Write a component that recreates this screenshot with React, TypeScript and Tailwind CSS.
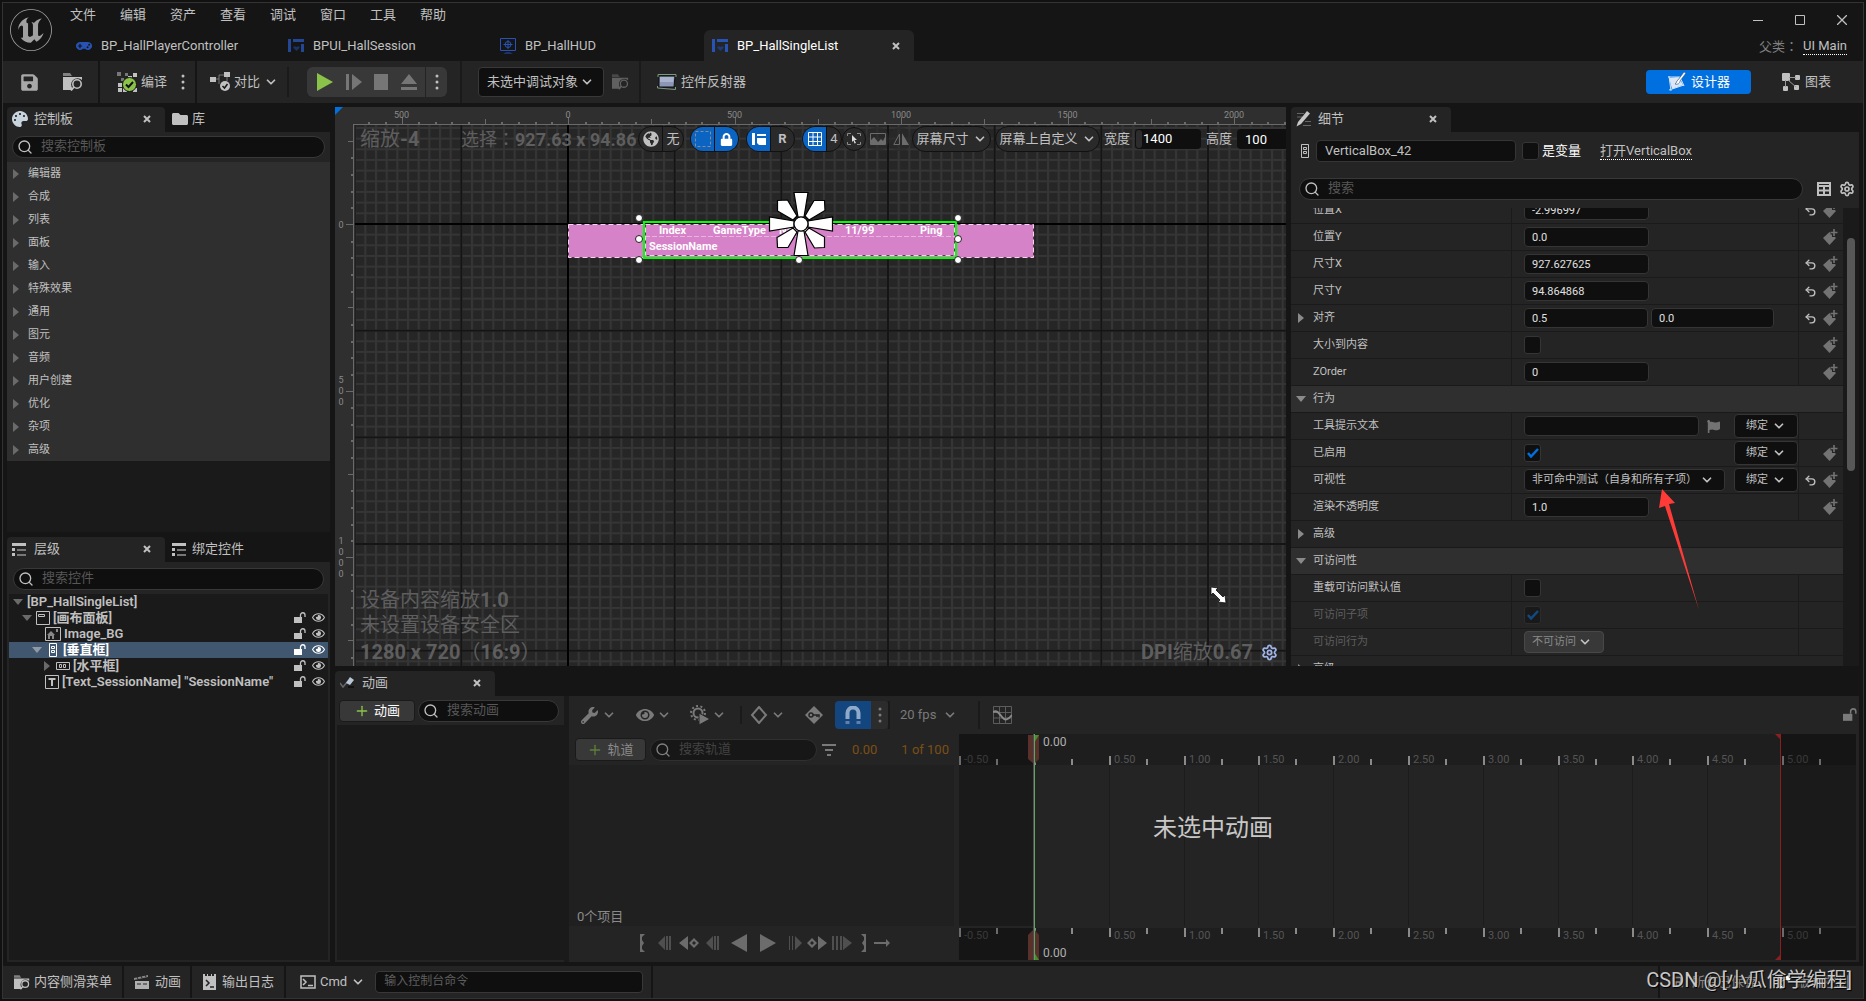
import { useId, type ReactNode } from 'react';
import { ChevronDown, Plus, Search, Settings, Undo2 } from 'lucide-react';
import { FaEye, FaFlag, FaFolder, FaGamepad, FaGlobeAmericas, FaLock, FaPalette, FaRegEye, FaSave, FaWrench } from 'react-icons/fa';
import { SiUnrealengine } from 'react-icons/si';

const MENUS = ['文件', '编辑', '资产', '查看', '调试', '窗口', '工具', '帮助'];

const PALETTE = ['编辑器', '合成', '列表', '面板', '输入', '特殊效果', '通用', '图元', '音频', '用户创建', '优化', '杂项', '高级'];

type IconProps = { className?: string };

/* ---------- icons ---------- */

function WidgetIcon({ className = '' }: IconProps) {
  return (
    <svg viewBox="0 0 16 14" className={`h-[14px] w-4 shrink-0 ${className}`} fill="#2753b5">
      <path d="M0 0h3v13H0zM5 0h11v3H5zM13 5h3v8h-3z" />
      <path d="M8.5 12 5.5 9c-.8-1.6 1.700-2.600 3-.9 1.300-1.700 3.800-.7 3 .9z" fill="#1e3a78" />
    </svg>
  );
}

function HudIcon() {
  return (
    <svg viewBox="0 0 16 16" className="size-4 shrink-0" fill="none" stroke="#2753b5">
      <path d="M.5.5h15v12H.5z" />
      <circle cx="8" cy="6.500" r="3" />
      <path d="M8 2v9M3.500 6.500h9" />
      <path d="M3 15.500c2-1.500 8-1.500 10 0z" fill="#2753b5" stroke="none" />
    </svg>
  );
}

function FolderSearchIcon({ className = '' }: IconProps) {
  return (
    <svg viewBox="0 0 20 18" className={`shrink-0 ${className}`}>
      <path d="M0 0h7l2 3H0z" fill="currentColor" opacity=".6" />
      <path d="M0 4h19v3a6 6 0 0 0-9 9l-1 1H0z" fill="currentColor" />
      <circle cx="14" cy="11" r="4.200" fill="#242424" stroke="currentColor" strokeWidth="1.600" />
      <path d="m11 14-3 3.500" stroke="currentColor" strokeWidth="1.800" />
    </svg>
  );
}

function CompileIcon() {
  return (
    <svg viewBox="0 0 20 20" className="size-5 shrink-0" fill="#c0c0c0">
      <path d="M0 0h4v4H0zM8 1h3v3H8zM4 6h3v3H4z" fill="#777" />
      <path d="M16 1h4v4h-4zM11 4h4v4h-4zM1 11h4v4H1zM1 16h4v4H1zM6 16h4v4H6zM16 16h4v4h-4z" />
      <circle cx="12.500" cy="12.500" r="7" fill="#8bc34a" stroke="#151515" />
      <path d="m9 12.500 2.500 2.500 4.500-5" fill="none" stroke="#111" strokeWidth="2" />
    </svg>
  );
}

function DiffIcon() {
  return (
    <svg viewBox="0 0 20 20" className="size-5 shrink-0" fill="#c0c0c0">
      <path d="M0 5h6v5H0zM14 0h6v5h-6z" />
      <path d="M6 7h3M9 12V3h5M17 5v4" fill="none" stroke="#777" />
      <circle cx="15" cy="14" r="5" />
      <path d="m12.500 14 2 2 3-4" fill="none" stroke="#151515" strokeWidth="1.500" />
    </svg>
  );
}

function ReflectorIcon() {
  return (
    <svg viewBox="0 0 20 16" className="h-4 w-5 shrink-0">
      <path d="M2 2h16l-1 11H2z" fill="#8c97b8" stroke="#111" />
      <path d="M3 3h14l-1 5H3z" fill="#aab3cc" />
      <path d="M1 3V.5h18V3M.5 12v2l18 1.500V13" fill="none" stroke="#7a9a80" />
    </svg>
  );
}

function DesignerIcon() {
  return (
    <svg viewBox="0 0 20 20" className="size-5 shrink-0">
      <path d="m2 6 10-1 4 8-11 4z" fill="#dbe7f5" />
      <path d="M1 5h12M2 4l2 15M2 18l15-5M13 5l4 9" fill="none" stroke="#cfe3fa" />
      <path d="M8 12c2-1 1-3 3-4l6-8 2 1-6 8c0 2-2 4-5 3z" fill="#fff" stroke="#1e4c86" strokeWidth=".6" />
    </svg>
  );
}

function GraphIcon() {
  return (
    <svg viewBox="0 0 18 18" className="size-[18px] shrink-0" fill="#c0c0c0">
      <rect width="8" height="8" rx="1" />
      <rect x="13" y="2" width="5" height="5" rx="1" />
      <rect x="1" y="13" width="5" height="5" rx="1" />
      <rect x="12" y="12" width="5" height="5" rx="1" />
      <path d="M7 4.500h7M3.500 7v7M6 7l8 7" stroke="#999" />
    </svg>
  );
}

function ListIcon() {
  return (
    <svg viewBox="0 0 14 13" className="h-[13px] w-[14px] shrink-0" fill="#c0c0c0">
      <path d="M0 0h14v3H0zM0 5h3v3H0zM0 10h3v3H0z" />
      <path d="M5 6h9v2H5zM5 11h9v2H5z" fill="#777" />
    </svg>
  );
}

function PencilIcon() {
  return (
    <svg viewBox="0 0 16 16" className="size-4 shrink-0">
      <path d="M1 2.500h7M1 6h5M9 10.500h6M7 14.500h8" stroke="#666" />
      <path d="m11 0 3 2.500-9 10.500-4.500 2.500L2 11z" fill="#c8c8c8" />
    </svg>
  );
}

function AnimIcon() {
  return (
    <svg viewBox="0 0 15 12" className="h-3 w-[15px] shrink-0">
      <path d="m0 6 3 4 5-6" fill="none" stroke="#666" strokeWidth="1.500" />
      <path d="m10 0 4 3-4 5-4-2z" fill="#b9c6d6" />
      <path d="M8 10h6" stroke="#111" strokeWidth="2" />
    </svg>
  );
}

function VBoxIcon() {
  return (
    <svg viewBox="0 0 8 14" className="h-[14px] w-2 shrink-0" fill="none" stroke="currentColor">
      <path d="M.5.5h7v13h-7zM2.500 3.500h3v2h-3zM2.500 7.500h3v2h-3z" />
    </svg>
  );
}

function HBoxIcon() {
  return (
    <svg viewBox="0 0 14 8" className="h-2 w-[14px] shrink-0" fill="none" stroke="currentColor">
      <path d="M.5.5h13v7H.5zM3.500 2.500h2v3h-2zM7.500 2.500h2v3h-2z" />
    </svg>
  );
}

function CanvasIcon() {
  return (
    <svg viewBox="0 0 14 14" className="size-[14px] shrink-0" fill="none" stroke="currentColor">
      <path d="M.5.5h13v13H.5zM2.500 3.500h6v2h-6z" />
    </svg>
  );
}

function ImageIcon() {
  return (
    <svg viewBox="0 0 16 14" className="h-[14px] w-4 shrink-0" fill="none" stroke="currentColor">
      <path d="M.5.500h15v13H.5z" />
      <path d="m2 8 4-4 4 4H9v4H7V9H5v3H3V8zM11 2h2v3h-2z" fill="#888" stroke="none" />
    </svg>
  );
}

function TextIcon() {
  return (
    <svg viewBox="0 0 14 14" className="size-[14px] shrink-0" fill="none" stroke="currentColor">
      <path d="M.5.5h13v13H.5z" />
      <path d="M3.500 4h7M7 4v7" strokeWidth="2" />
    </svg>
  );
}

function UnlockIcon({ className = '' }: IconProps) {
  return (
    <svg viewBox="0 0 12 12" className={`size-3 shrink-0 ${className}`}>
      <path d="M0 5h8v6H0z" fill="currentColor" />
      <path d="M6.500 5V3a2.200 2.200 0 0 1 4.500 0v2" fill="none" stroke="currentColor" strokeWidth="1.300" />
    </svg>
  );
}

function KeyframeIcon() {
  return (
    <svg viewBox="0 0 15 16" className="h-4 w-[15px] shrink-0" fill="#737373">
      <path d="m6.500 3 6.500 6-6.500 7L0 9z" />
      <path d="M11 0v8M7.500 3.500H15" stroke="#242424" strokeWidth="4" />
      <path d="M11 0v7M7.500 3.500h7" stroke="#737373" strokeWidth="1.600" />
    </svg>
  );
}

function Dots({ className = '' }: IconProps) {
  return (
    <svg viewBox="0 0 4 16" className={`h-4 w-1 shrink-0 ${className}`} fill="currentColor">
      <circle cx="2" cy="2" r="1.500" />
      <circle cx="2" cy="8" r="1.500" />
      <circle cx="2" cy="14" r="1.500" />
    </svg>
  );
}

function Caret({ open, className = '' }: { open?: boolean; className?: string }) {
  return (
    <svg viewBox="0 0 10 10" className={`size-[10px] shrink-0 ${className}`} fill="currentColor">
      <path d={open ? 'M0 2h10L5 8z' : 'M2 0v10l6-5z'} />
    </svg>
  );
}

function Chevron({ className = '' }: IconProps) {
  return <ChevronDown className={`size-[14px] shrink-0 ${className}`} strokeWidth={3} />;
}

// the TC face centres full-width punctuation in its cell
function Punct({ children }: { children: string }) {
  return <span className="font-['Noto_Sans_CJK_TC',sans-serif] font-normal">{children}</span>;
}

/* ---------- shared controls ---------- */

function SearchBox({ placeholder, className = '' }: { placeholder: string; className?: string }) {
  return (
    <label className={`flex h-[22px] min-w-0 items-center gap-2 rounded-full border border-[#383838] bg-[#0f0f0f] pl-1 ${className}`}>
      <Search className="size-4 shrink-0 text-[#c0c0c0]" strokeWidth={2} />
      <input
        type="search"
        aria-label={placeholder}
        placeholder={placeholder}
        className="w-full min-w-0 bg-transparent pb-[2px] text-[13px] leading-4 outline-none placeholder:text-[#575757]"
      />
    </label>
  );
}

function DockTab({ icon, label, active, wide }: { icon: ReactNode; label: string; active?: boolean; wide?: boolean }) {
  return (
    <div className={`flex h-[25px] shrink-0 items-center pb-px pl-[5px] ${active ? 'rounded-t bg-[#242424]' : ''} ${wide ? 'w-40' : 'w-[158px]'}`}>
      <span className="flex w-[22px] items-center">{icon}</span>
      <span className="grow text-[13px] leading-4">{label}</span>
      {active && (
        <button aria-label={`关闭${label}`} className="mr-3 flex size-3 items-center justify-center">
          <CloseMark />
        </button>
      )}
    </div>
  );
}

function CloseMark() {
  return (
    <svg viewBox="0 0 8 8" className="size-2" stroke="currentColor" strokeWidth="2">
      <path d="m1 1 6 6M7 1 1 7" />
    </svg>
  );
}

function Check({ id, label, checked, disabled }: { id?: string; label?: string; checked?: boolean; disabled?: boolean }) {
  return (
    <span className={`relative flex h-[18px] w-[17px] shrink-0 ${disabled ? 'opacity-50' : ''}`}>
      <input
        id={id}
        type="checkbox"
        aria-label={label}
        defaultChecked={checked}
        disabled={disabled}
        className="size-full appearance-none rounded-[3px] border border-[#353535] bg-[#0f0f0f]"
      />
      {checked && (
        <svg viewBox="0 0 12 10" className="pointer-events-none absolute top-1 left-[3px] h-[10px] w-3" fill="none" stroke="#0070e0" strokeWidth="2.500">
          <path d="m1 5 3 3.500L11 1" />
        </svg>
      )}
    </span>
  );
}

/* ---------- title bar ---------- */

const DOCS = [
  { name: 'BP_HallPlayerController', icon: <FaGamepad className="size-4 text-[#2753b5]" /> },
  { name: 'BPUI_HallSession', icon: <WidgetIcon className="opacity-80" /> },
  { name: 'BP_HallHUD', icon: <HudIcon /> },
  { name: 'BP_HallSingleList', icon: <WidgetIcon />, active: true },
];

function TitleBar() {
  return (
    <header className="flex h-[58px] shrink-0">
      <SiUnrealengine className="mt-[6px] ml-[7px] size-[42px] shrink-0 text-[#a0a0a0]" />
      <div className="ml-4 flex grow flex-col justify-between">
        <nav className="flex pt-1 pl-[2px]">
          {MENUS.map((m) => (
            <button key={m} className="w-[50px] text-left text-[13px] leading-4">
              {m}
            </button>
          ))}
        </nav>
        <div className="flex gap-[2px]">
          {DOCS.map((d) => (
            <div
              key={d.name}
              className={`flex h-[31px] w-[210px] items-center gap-[9px] rounded-t-md pl-2 text-[13px] ${d.active ? 'bg-[#242424] text-white' : ''}`}
            >
              {d.icon}
              <span className="grow">{d.name}</span>
              {d.active && (
                <button aria-label="关闭标签" className="mr-3 flex size-3 items-center justify-center text-[#c0c0c0]">
                  <CloseMark />
                </button>
              )}
            </div>
          ))}
        </div>
      </div>
      <div className="flex flex-col items-end justify-between pr-4 pb-[6px]">
        <div className="flex gap-8 pt-3">
          <button aria-label="最小化">
            <svg viewBox="0 0 10 10" className="size-[10px]" stroke="currentColor"><path d="M0 5.500h10" /></svg>
          </button>
          <button aria-label="最大化">
            <svg viewBox="0 0 10 10" className="size-[10px]" fill="none" stroke="currentColor"><path d="M.5.5h9v9h-9z" /></svg>
          </button>
          <button aria-label="关闭">
            <svg viewBox="0 0 10 10" className="size-[10px]" stroke="currentColor" strokeWidth="1.300"><path d="m0 0 10 10M10 0 0 10" /></svg>
          </button>
        </div>
        <p className="flex gap-[5px] text-[13px] leading-4">
          <span className="text-[#808080]">父类<Punct>：</Punct></span>
          <a href="#parent" className="border-b border-dotted border-white">UI Main</a>
        </p>
      </div>
    </header>
  );
}

/* ---------- toolbar ---------- */

function Toolbar() {
  return (
    <div className="flex h-[42px] shrink-0 items-center bg-[#242424] text-[13px]">
      <div className="flex h-full w-[97px] items-center gap-6 border-r-2 border-[#151515] pl-[17px]">
        <button aria-label="保存"><FaSave className="size-[19px] text-[#a8a8a8]" /></button>
        <button aria-label="浏览"><FolderSearchIcon className="h-[18px] w-5" /></button>
      </div>
      <div className="flex h-full w-[97px] items-center border-r-2 border-[#151515] pl-[17px]">
        <button className="flex items-center gap-1"><CompileIcon />编译</button>
        <button aria-label="编译选项" className="ml-[14px]"><Dots /></button>
      </div>
      <button className="flex h-[30px] w-[92px] items-center gap-1 border-r-2 border-[#1a1a1a] pl-[13px]">
        <DiffIcon />对比<Chevron />
      </button>
      <div className="ml-[18px] flex h-[30px] w-[140px] items-center rounded-md bg-[#383838] text-[#767676]">
        <button aria-label="播放" className="ml-[10px]"><svg viewBox="0 0 16 18" className="h-[18px] w-4" fill="#8bc34a"><path d="M0 0v18l16-9z" /></svg></button>
        <button aria-label="步进" className="ml-[13px]"><svg viewBox="0 0 16 16" className="size-4" fill="currentColor"><path d="M0 0h3v16H0zM6 0v16l10-8z" /></svg></button>
        <button aria-label="停止" className="ml-3"><svg viewBox="0 0 14 16" className="h-4 w-[14px]" fill="currentColor"><path d="M0 0h14v16H0z" /></svg></button>
        <button aria-label="弹出" className="ml-[13px]"><svg viewBox="0 0 16 16" className="size-4" fill="currentColor"><path d="m8 0 8 10H0zM0 13h16v3H0z" /></svg></button>
        <button aria-label="播放选项" className="ml-2 flex h-full w-[22px] items-center justify-center border-l border-[#242424] text-[#c0c0c0]"><Dots /></button>
      </div>
      <div className="ml-[13px] h-full w-[2px] bg-[#1a1a1a]" />
      <label className="relative ml-4 flex items-center">
        <select aria-label="调试对象" className="h-[30px] w-[126px] appearance-none rounded border border-[#383838] bg-[#0f0f0f] pl-2 text-[13px] text-[#c0c0c0]">
          <option>未选中调试对象</option>
        </select>
        <Chevron className="pointer-events-none absolute right-[10px]" />
      </label>
      <button aria-label="浏览调试对象" className="ml-2 text-[#606060]"><FolderSearchIcon className="h-4 w-[17px]" /></button>
      <div className="ml-[10px] h-full w-[2px] bg-[#1a1a1a]" />
      <button className="ml-4 flex items-center gap-1"><ReflectorIcon />控件反射器</button>
      <div className="ml-auto flex items-center pr-8">
        <button className="flex h-6 w-[105px] items-center justify-center gap-1 rounded bg-[#0070e0] text-white"><DesignerIcon />设计器</button>
        <button className="ml-[31px] flex items-center gap-[5px]"><GraphIcon />图表</button>
      </div>
    </div>
  );
}

/* ---------- left column ---------- */

function PalettePanel() {
  return (
    <section className="flex min-h-0 flex-1 flex-col">
      <div className="flex">
        <DockTab active label="控制板" icon={<FaPalette className="size-4 text-[#c7d3dd]" />} />
        <DockTab label="库" icon={<FaFolder className="ml-[2px] size-4" />} />
      </div>
      <div className="bg-[#242424] px-[5px] py-1"><SearchBox placeholder="搜索控制板" /></div>
      <ul className="bg-[#2f2f2f] text-[11px]">
        {PALETTE.map((p) => (
          <li key={p} className="flex h-[23px] items-center gap-[7px] pt-px pl-1">
            <Caret className="text-[#6a6a6a]" />
            {p}
          </li>
        ))}
      </ul>
      <div className="grow bg-[#1a1a1a]" />
    </section>
  );
}

const TREE = [
  { name: '[BP_HallSingleList]', pad: 'pl-1', open: true, icon: null },
  { name: '[画布面板]', pad: 'pl-[13px]', open: true, icon: <CanvasIcon />, toggles: true },
  { name: 'Image_BG', pad: 'pl-9', icon: <ImageIcon />, toggles: true },
  { name: '[垂直框]', pad: 'pl-[23px]', open: true, icon: <VBoxIcon />, toggles: true, selected: true },
  { name: '[水平框]', pad: 'pl-[33px]', open: false, icon: <HBoxIcon />, toggles: true },
  { name: '[Text_SessionName] "SessionName"', pad: 'pl-9', icon: <TextIcon />, toggles: true },
];

function HierarchyPanel() {
  return (
    <section className="flex min-h-0 flex-1 flex-col">
      <div className="flex">
        <DockTab active label="层级" icon={<ListIcon />} />
        <DockTab label="绑定控件" icon={<span className="ml-[2px]"><ListIcon /></span>} />
      </div>
      <div className="flex grow flex-col bg-[#242424] px-[2px] pt-[6px] pb-[2px]">
        <SearchBox placeholder="搜索控件" className="mx-1 mb-1" />
        <ul className="grow bg-[#1a1a1a] text-[13px] leading-4 font-semibold">
          {TREE.map((n) => (
            <li key={n.name} className={`flex h-4 items-center ${n.pad} ${n.selected ? 'bg-[#40576f] text-white' : ''}`}>
              {n.open !== undefined && <Caret open={n.open} className={`mr-1 ${n.selected ? 'text-[#8f9aa5]' : 'text-[#6a6a6a]'}`} />}
              {n.selected && <span className="w-[3px]" />}
              {n.icon}
              <span className={`grow whitespace-nowrap ${n.selected ? 'pl-[6px]' : n.icon ? 'pl-[3px]' : ''}`}>{n.name}</span>
              {n.toggles && (
                <span className="flex items-center gap-[6px] pr-[3px] pb-px">
                  <button aria-label="锁定"><UnlockIcon /></button>
                  <button aria-label="可见"><FaRegEye className="size-[13px]" /></button>
                </span>
              )}
            </li>
          ))}
        </ul>
      </div>
    </section>
  );
}

/* ---------- designer viewport ---------- */

const ORIGIN_X = 233;
const ORIGIN_Y = 117;
const STEP = 16.65;

function tickLength(i: number) {
  if (i % 10 === 0) return 7;
  return i % 5 === 0 ? 5 : 2;
}

function DesignSurface() {
  const hTicks = Array.from({ length: 60 }, (_, i) => i - 12);
  const vTicks = Array.from({ length: 60 }, (_, i) => i - 5);
  return (
    <svg className="absolute inset-0 size-full" fontFamily="Roboto, sans-serif">
      <defs>
        <pattern id="minor" x={ORIGIN_X - 1} y={ORIGIN_Y - 1} width="10.667" height="10.667" patternUnits="userSpaceOnUse">
          <path d="M1 0v10.667M0 1h10.667" stroke="#353535" strokeWidth="2" />
        </pattern>
        <pattern id="major" x={ORIGIN_X - 1} y={ORIGIN_Y - 1} width="106.670" height="106.670" patternUnits="userSpaceOnUse">
          <path d="M1 0v106.670M0 1h106.670" stroke="#151515" strokeWidth="2" />
        </pattern>
      </defs>
      <rect width="100%" height="100%" fill="#262626" />
      <rect width="100%" height="100%" fill="url(#minor)" />
      <rect width="100%" height="100%" fill="url(#major)" />
      <rect x={ORIGIN_X - 1} width="2" height="100%" />
      <rect y={ORIGIN_Y - 1} width="100%" height="2" />

      {/* rulers */}
      <rect width="100%" height="18" fill="#2f2f2f" />
      <rect width="20" height="100%" fill="#2f2f2f" />
      <path d="M18 17.500h2000M18.500 17v2000" stroke="#6a6a6a" />
      <g fill="#6a6a6a">
        {hTicks.map((i) => (
          <rect key={i} x={Math.round(ORIGIN_X + i * STEP)} y={17 - tickLength(i)} width={i % 5 ? 2 : 1} height={tickLength(i)} />
        ))}
        {vTicks.map((i) => (
          <rect key={i} x={18 - tickLength(i)} y={Math.round(ORIGIN_Y + i * STEP)} width={tickLength(i)} height={i % 5 ? 2 : 1} />
        ))}
      </g>
      <rect width="18" height="17" fill="#2f2f2f" />
      <g fill="#8a8a8a" fontSize="9" textAnchor="middle">
        {[-500, 0, 500, 1000, 1500, 2000].map((v) => (
          <text key={v} x={ORIGIN_X + v * 0.333} y="11">{Math.abs(v)}</text>
        ))}
        <text x="6" y="121">0</text>
        {[...'500'].map((c, i) => <text key={i} x="6" y={276 + i * 11}>{c}</text>)}
        {[...'1000'].map((c, i) => <text key={i} x="6" y={437 + i * 11}>{c}</text>)}
      </g>
      <path d="M0 0h8L0 8z" fill="#0070e0" />

      {/* edited widget */}
      <rect x="233" y="117" width="466" height="34" fill="#d682c9" />
      <rect x="233.500" y="117.500" width="465" height="33" fill="none" stroke="#5c3556" />
      <rect x="233.500" y="117.500" width="465" height="33" fill="none" stroke="#f3d3ee" strokeDasharray="5 3" />
      <path d="M310 129.500h309" stroke="#f0c8ea" strokeDasharray="5 2" opacity=".7" />
      <g fill="none">
        <rect x="310.500" y="117.500" width="309" height="31" stroke="#5c3556" />
        <rect x="310.500" y="117.500" width="309" height="31" stroke="#f3d3ee" strokeDasharray="5 3" />
        <rect x="309" y="115" width="312" height="36" stroke="#00ff00" strokeWidth="2" />
      </g>
      <g fill="#fff" fontSize="11" fontWeight="700">
        <text x="324" y="127">Index</text>
        <text x="378" y="127">GameType</text>
        <text x="444" y="127">Name</text>
        <text x="510" y="127">11/99</text>
        <text x="585" y="127">Ping</text>
        <text x="314" y="143">SessionName</text>
      </g>
      <g fill="#fff" stroke="#222">
        {[[304, 111], [304, 132], [304, 153], [464, 153], [623, 111], [623, 132], [623, 153]].map(([x, y]) => (
          <circle key={`${x},${y}`} cx={x} cy={y} r="3.500" />
        ))}
      </g>
      <g transform="translate(466 117)" fill="#fff" stroke="#000" strokeWidth="1.200">
        {[0, 90, 180, 270].map((a) => (
          <g key={a} transform={`rotate(${a})`}>
            <path d="M-7-31.500H7L3-7h-6z" />
            <path d="m-23.500-23.500 10-.5L-4-8l-4 4-15.500-9z" />
          </g>
        ))}
        <circle r="7" />
      </g>

      {/* resize cursor */}
      <path d="m876 480 7 1-2 2 7 7 2-2 1 8-8-1 2-2-7-7-2 2z" fill="#fff" stroke="#111" strokeWidth=".8" />
    </svg>
  );
}

const PILL = 'flex h-[26px] shrink-0 items-center overflow-hidden rounded-full border border-[#111] bg-[#2a2a2a]';

function ViewportBar() {
  return (
    <div className="relative flex items-center pt-[19px] pl-[25px] text-[13px]">
      <span className="w-[101px] shrink-0 text-[20px] leading-6 font-bold text-[#5e5e5e]"><span className="font-normal">缩放</span>-4</span>
      <span className="w-[177px] shrink-0 text-[18px] leading-6 font-bold whitespace-nowrap text-[#5e5e5e]"><span className="font-normal">选择</span><Punct>：</Punct>927.63 x 94.86</span>
      <div className={`${PILL} w-[46px]`}>
        <button aria-label="本地化" className="flex h-full w-6 items-center justify-center border-r border-[#111]"><FaGlobeAmericas className="size-4" /></button>
        <button className="w-5 text-center">无</button>
      </div>
      <div className={`${PILL} ml-[6px] w-[49px]`}>
        <button aria-label="虚线轮廓" className="flex h-full w-6 items-center justify-center border-r border-[#111] bg-[#0b63c2]">
          <svg viewBox="0 0 16 16" className="size-4" fill="none" stroke="#8b8b8b" strokeDasharray="3 2"><path d="M.5.5h15v15H.5z" /></svg>
        </button>
        <button aria-label="尊重锁定" className="flex h-full grow items-center justify-center bg-[#0b63c2] text-white"><FaLock className="size-[13px]" /></button>
      </div>
      <div className={`${PILL} ml-[7px] w-[49px]`}>
        <button aria-label="布局变换" className="flex h-full w-6 items-center justify-center border-r border-[#111] bg-[#0b63c2]">
          <svg viewBox="0 0 14 12" className="h-3 w-[14px]" fill="#fff"><path d="M0 0h3v12H0zM5 1h9v2H5zM5 5h9v7H7l-2-2z" /></svg>
        </button>
        <button className="grow text-center font-bold">R</button>
      </div>
      <div className={`${PILL} ml-[7px] w-10`}>
        <button aria-label="网格对齐" className="flex h-full w-6 items-center justify-center border-r border-[#111] bg-[#0b63c2]">
          <svg viewBox="0 0 14 14" className="size-[14px]" fill="none" stroke="#fff"><path d="M.5.5h13v13H.5zM5 0v14M9.500 0v14M0 5h14M0 9.500h14" /></svg>
        </button>
        <button className="grow text-center">4</button>
      </div>
      <button aria-label="缩放到适应" className="flex size-6 shrink-0 items-center justify-center rounded-full border border-[#111] bg-[#2a2a2a]">
        <svg viewBox="0 0 14 12" className="h-3 w-[14px]"><path d="M.5 3V.5H4M10 .5h3.500V3M.5 9v2.500H4M10 11.500h3.500V9" fill="none" stroke="#8a8a8a" /><path d="m5 2 5 5H7.500L9 10l-1.500.5-1-3L5 9z" fill="#ddd" /></svg>
      </button>
      <button aria-label="背景图片" className="flex h-6 w-[23px] shrink-0 items-center justify-center rounded-full bg-[#2a2a2a]/60 text-[#6c6c6c]">
        <svg viewBox="0 0 16 12" className="h-3 w-4"><path d="M.5.5h15v11H.5z" fill="none" stroke="currentColor" /><path d="M1 11V7l3-3 4 5 3-3 2 2 2-4v7z" fill="currentColor" /></svg>
      </button>
      <button aria-label="翻转" className="flex h-6 w-[23px] shrink-0 items-center justify-center rounded-full bg-[#2a2a2a]/60 text-[#6c6c6c]">
        <svg viewBox="0 0 16 12" className="h-3 w-4"><path d="M.8 11.500 6.500 1v10.500z" fill="none" stroke="currentColor" /><path d="M9 0v12h7z" fill="currentColor" /></svg>
      </button>
      <button className={`${PILL} w-[79px] justify-center gap-1`}>屏幕尺寸<Chevron className="size-[13px]" /></button>
      <button className={`${PILL} ml-1 w-[105px] justify-center gap-1`}>屏幕上自定义<Chevron className="size-[13px]" /></button>
      <label htmlFor="vp-width" className="ml-1 shrink-0">宽度</label>
      <span className="ml-[5px] flex h-5 w-[66px] shrink-0 items-center rounded bg-[#0f0f0f] pl-px">
        <span className="h-[18px] w-[6px] rounded-full bg-[#2c2c2c]" />
        <input id="vp-width" defaultValue="1400" className="w-14 bg-transparent pl-px text-white" />
      </span>
      <label htmlFor="vp-height" className="ml-[5px] shrink-0">高度</label>
      <input id="vp-height" defaultValue="100" className="ml-[5px] h-5 w-[60px] shrink-0 rounded bg-[#0f0f0f] pl-2 text-white" />
    </div>
  );
}

function Viewport() {
  return (
    <section className="relative flex min-w-0 flex-1 flex-col justify-between overflow-hidden">
      <DesignSurface />
      <ViewportBar />
      <div className="relative flex items-end justify-between pr-2 pb-px pl-[25px] text-[20px] leading-[25px] text-[#5e5e5e]">
        <p>
          设备内容缩放<b>1.0</b>
          <br />
          未设置设备安全区
          <br />
          <b>1280 x 720</b><Punct>（</Punct><b>16:9</b><Punct>）</Punct>
        </p>
        <p className="flex items-center gap-2">
          <span><b>DPI</b>缩放<b>0.67</b></span>
          <button aria-label="DPI设置"><Settings className="size-[17px] text-[#9fb4e8]" strokeWidth={2.5} /></button>
        </p>
      </div>
    </section>
  );
}

/* ---------- details ---------- */

type RowProps = { label: string; expand?: boolean; reset?: boolean; keyable?: boolean; dim?: boolean; children?: (id: string) => ReactNode };

function Row({ label, expand, reset, keyable, dim, children }: RowProps) {
  const id = useId();
  return (
    <div className="flex h-[27px] shrink-0 items-stretch border-b border-[#1a1a1a]">
      <div className="flex w-[221px] shrink-0 items-center gap-[7px] border-r border-[#1a1a1a] pl-[5px]">
        {expand ? <Caret className="text-[#8a8a8a]" /> : <span className="w-[10px]" />}
        <label htmlFor={id} className={dim ? 'text-[#5e5e5e]' : ''}>{label}</label>
      </div>
      <div className="flex grow items-center border-r border-[#1a1a1a] pl-3">{children?.(id)}</div>
      <div className="flex w-11 shrink-0 items-center justify-end gap-[6px] pr-[5px]">
        {reset && <button aria-label={`重置${label}`}><Undo2 className="size-[13px]" strokeWidth={2.5} /></button>}
        {keyable && <button aria-label={`关键帧${label}`}><KeyframeIcon /></button>}
      </div>
    </div>
  );
}

const FIELD = 'h-5 rounded border border-[#353535] bg-[#0f0f0f] pl-[7px] text-[11px] text-[#e0e0e0]';

function GroupHeader({ label }: { label: string }) {
  return (
    <h3 className="flex h-[27px] shrink-0 items-center gap-[7px] border-b border-[#1a1a1a] bg-[#2f2f2f] pl-[5px]">
      <Caret open className="text-[#8a8a8a]" />
      {label}
    </h3>
  );
}

function SubGroup({ label }: { label: string }) {
  return (
    <div className="flex h-[27px] shrink-0 items-center gap-[7px] border-b border-[#1a1a1a] pl-[5px]">
      <Caret className="text-[#8a8a8a]" />
      {label}
    </div>
  );
}

function BindButton() {
  return (
    <button className="ml-auto flex h-6 w-16 items-center justify-center gap-1 rounded border border-[#353535] bg-[#0f0f0f]">
      绑定<Chevron className="size-3" />
    </button>
  );
}

function DetailsPanel() {
  return (
    <aside className="flex w-[568px] shrink-0 flex-col">
      <DockTab active wide label="细节" icon={<PencilIcon />} />
      <div className="flex min-h-0 grow flex-col bg-[#242424] pt-2">
        <div className="flex h-[22px] shrink-0 items-center pl-[10px] text-[13px]">
          <VBoxIcon />
          <input aria-label="控件名称" defaultValue="VerticalBox_42" className="ml-[7px] h-[22px] w-[200px] rounded border border-[#353535] bg-[#0f0f0f] pb-[2px] pl-2" />
          <label className="ml-[6px] flex items-center gap-[3px] text-white">
            <Check />
            是变量
          </label>
          <a href="#open" className="ml-[19px] border-b border-dotted border-white leading-4">打开VerticalBox</a>
        </div>
        <div className="mt-4 mb-2 flex shrink-0 items-center pr-1 pl-2">
          <SearchBox placeholder="搜索" className="grow" />
          <button aria-label="视图" className="ml-[14px]">
            <svg viewBox="0 0 14 14" className="size-[14px]" fill="none" stroke="#c0c0c0" strokeWidth="2"><path d="M1 1h12v12H1zM1 4h12M1 8.500h12M7 4v9" /></svg>
          </button>
          <button aria-label="设置" className="ml-2"><Settings className="size-4" strokeWidth={2.5} /></button>
        </div>
        <div className="flex min-h-0 grow">
          <div className="flex h-[458px] min-w-0 grow flex-col overflow-hidden text-[11px]">
            {/* list is scrolled part way into the first row */}
            <div className="-mt-[11px] flex flex-col">
              <Row label="位置X" reset keyable>{(id) => <input id={id} defaultValue="-2.996997" className={`${FIELD} w-[125px]`} />}</Row>
              <Row label="位置Y" keyable>{(id) => <input id={id} defaultValue="0.0" className={`${FIELD} w-[125px]`} />}</Row>
              <Row label="尺寸X" reset keyable>{(id) => <input id={id} defaultValue="927.627625" className={`${FIELD} w-[125px]`} />}</Row>
              <Row label="尺寸Y" reset keyable>{(id) => <input id={id} defaultValue="94.864868" className={`${FIELD} w-[125px]`} />}</Row>
              <Row label="对齐" expand reset keyable>
                {(id) => (
                  <>
                    <input id={id} defaultValue="0.5" className={`${FIELD} w-[124px]`} />
                    <input aria-label="对齐Y" defaultValue="0.0" className={`${FIELD} ml-[3px] w-[123px]`} />
                  </>
                )}
              </Row>
              <Row label="大小到内容" keyable>{(id) => <Check id={id} />}</Row>
              <Row label="ZOrder" keyable>{(id) => <input id={id} defaultValue="0" className={`${FIELD} w-[125px]`} />}</Row>
              <GroupHeader label="行为" />
              <Row label="工具提示文本">
                {(id) => (
                  <>
                    <input id={id} className={`${FIELD} w-[175px]`} />
                    <FaFlag className="ml-2 size-[13px] text-[#737373]" />
                    <BindButton />
                  </>
                )}
              </Row>
              <Row label="已启用" keyable>{(id) => <><Check id={id} checked /><BindButton /></>}</Row>
              <Row label="可视性" reset keyable>
                {(id) => (
                  <>
                    <span className="relative flex items-center">
                      <select id={id} className="h-[22px] w-[201px] appearance-none rounded border border-[#353535] bg-[#0f0f0f] pl-[7px] text-[11px]">
                        <option>非可命中测试（自身和所有子项）</option>
                      </select>
                      <Chevron className="pointer-events-none absolute right-[11px] size-3" />
                    </span>
                    <BindButton />
                  </>
                )}
              </Row>
              <Row label="渲染不透明度" keyable>{(id) => <input id={id} defaultValue="1.0" className={`${FIELD} w-[125px]`} />}</Row>
              <SubGroup label="高级" />
              <GroupHeader label="可访问性" />
              <Row label="重载可访问默认值">{(id) => <Check id={id} />}</Row>
              <Row label="可访问子项" dim>{(id) => <Check id={id} checked disabled />}</Row>
              <Row label="可访问行为" dim>
                {(id) => (
                  <span className="relative flex items-center">
                    <select id={id} disabled className="h-[22px] w-20 appearance-none rounded border border-[#484848] bg-[#383838] pl-[7px] text-[11px] text-[#8a8a8a] opacity-100">
                      <option>不可访问</option>
                    </select>
                    <Chevron className="pointer-events-none absolute right-3 size-3" />
                  </span>
                )}
              </Row>
              <SubGroup label="高级" />
            </div>
          </div>
          <div className="w-4 shrink-0 bg-[#1a1a1a] pt-[30px] pl-1">
            <div className="h-[233px] w-2 rounded-full bg-[#575757]" />
          </div>
        </div>
      </div>
    </aside>
  );
}

/* ---------- animation dock ---------- */

const ZERO = 75;
const HALF_SECOND = 74.8;
const END = 821;

function Timeline() {
  const marks = Array.from({ length: 12 }, (_, i) => i - 1);
  return (
    <div className="relative flex min-w-0 grow">
      <svg className="absolute inset-0 size-full" fontFamily="Roboto, sans-serif" fontSize="11">
        <rect width="100%" height="100%" fill="#242424" />
        <rect width="100%" height="31" fill="#1e1e1e" />
        <rect y="194" width="100%" height="32" fill="#1e1e1e" />
        {marks.map((m) => (
          <rect key={m} x={Math.round(ZERO + m * HALF_SECOND)} y="31" width="1" height="161" fill="#1c1c1c" />
        ))}
        <g fill="#151515">
          <rect width={ZERO} height="31" />
          <rect width={ZERO} y="194" height="32" />
          <rect x={END} width="100" height="31" />
          <rect x={END} y="194" width="100" height="32" />
        </g>
        <g fill="#1a1a1a">
          <rect y="31" width={ZERO} height="161" />
          <rect x={END} y="31" width="100" height="161" />
        </g>
        {marks.map((m) => {
          const x = Math.round(ZERO + m * HALF_SECOND);
          const out = m < 0 || m > 9;
          return (
            <g key={m} fill={out ? '#6a6a6a' : '#8a8a8a'}>
              <rect x={x} y="22" width="2" height="9" />
              <rect x={x + 37} y="25" width="2" height="6" />
              <rect x={x} y="194" width="2" height="9" />
              <rect x={x + 37} y="194" width="2" height="6" />
              {m !== 0 && (
                <g fill={out ? '#3a3a3a' : '#555'}>
                  <text x={x + 5} y="29">{(m / 2).toFixed(2)}</text>
                  <text x={x + 5} y="205">{(m / 2).toFixed(2)}</text>
                </g>
              )}
            </g>
          );
        })}
        <path d="M69 1h11v24l-5 5-6-5zM69 226v-25l6-6 5 6v25z" fill="#59302a" />
        <path d="M74 1h6l-5 8zM75 218l5 8h-5z" fill="#4c8a2c" />
        <rect x="74" width="1" height="226" fill="#4b4b4b" />
        <rect x="75" width="1" height="226" fill="#5fa463" />
        <rect x={END} width="1" height="226" fill="#8b1e1e" />
        <path d="M821 0v5l-5-5zM821 226v-5l-5 5z" fill="#8b1e1e" />
        <g fill="#b0b0b0" fontSize="12">
          <text x="84" y="12">0.00</text>
          <text x="84" y="223">0.00</text>
        </g>
      </svg>
      <p className="relative mt-[78px] ml-[194px] text-[24px] leading-8 text-[#c8c8c8]">未选中动画</p>
    </div>
  );
}

const TRANSPORT = [
  { name: '设置起点', w: 'w-[5px]', box: '0 0 5 18', d: 'M0 0h5l-3 3v3l2 3-2 3v3l3 3H0z', cls: 'mr-[13px]' },
  { name: '到最前', w: 'w-[14px]', box: '0 0 14 18', d: 'M7 2v14L0 9zM8 2h2v14H8zM11 2h2v14h-2z', cls: 'mr-[7px] opacity-60' },
  { name: '上一关键帧', w: 'w-5', box: '0 0 20 18', d: 'M9 2v14L0 9zM15 4l5 5-5 5-5-5zM15 7l-2 2 2 2 2-2z', cls: 'mr-[7px]' },
  { name: '后退一帧', w: 'w-[14px]', box: '0 0 14 18', d: 'M7 2v14L0 9zM8 2h2v14H8zM11 2h2v14h-2z', cls: 'mr-[11px] opacity-60' },
  { name: '反向播放', w: 'w-4', box: '0 0 16 18', d: 'M16 0v18L0 9z', cls: 'mr-[13px]' },
  { name: '播放动画', w: 'w-4', box: '0 0 16 18', d: 'M0 0v18l16-9z', cls: 'mr-3' },
  { name: '前进一帧', w: 'w-[14px]', box: '0 0 14 18', d: 'M7 2v14l7-7zM1 2h1v14H1zM4 2h1v14H4z', cls: 'mr-[5px] opacity-60' },
  { name: '下一关键帧', w: 'w-5', box: '0 0 20 18', d: 'M11 2v14l9-7zM5 4l5 5-5 5-5-5zM5 7 3 9l2 2 2-2z', cls: 'mr-[5px]' },
  { name: '到最后', w: 'w-5', box: '0 0 20 18', d: 'M11 2v14l9-7zM0 2h2v14H0zM4 2h2v14H4zM8 2h2v14H8z', cls: 'mr-[9px] opacity-60' },
  { name: '设置终点', w: 'w-[5px]', box: '0 0 5 18', d: 'M5 0H0l3 3v3L1 9l2 3v3l-3 3h5z', cls: 'mr-2' },
  { name: '循环', w: 'w-4', box: '0 0 16 18', d: 'M0 8h12V5l4 4-4 4v-3H0z', cls: '' },
];

function SequencerBar() {
  return (
    <div className="flex h-[38px] shrink-0 items-center pr-[2px] pl-3 text-[13px] text-[#7a7a7a]">
      <button aria-label="操作" className="flex w-[55px] items-center gap-1"><FaWrench className="size-[17px]" /><Chevron /></button>
      <button aria-label="视图选项" className="flex w-[54px] items-center gap-[3px]"><FaEye className="size-[18px]" /><Chevron /></button>
      <button aria-label="播放选项" className="flex w-[50px] items-center gap-[2px]">
        <svg viewBox="0 0 20 20" className="size-5" fill="currentColor">
          <circle cx="8" cy="8" r="4.500" fill="none" stroke="currentColor" strokeWidth="2" />
          <circle cx="8" cy="8" r="7" fill="none" stroke="currentColor" strokeWidth="2" strokeDasharray="2 2.400" />
          <path d="M9 8v12l11-6z" stroke="#242424" />
        </svg>
        <Chevron />
      </button>
      <button aria-label="关键帧选项" className="flex w-14 items-center gap-[3px] border-l-2 border-[#1a1a1a] pl-2">
        <svg viewBox="0 0 18 18" className="size-[18px] shrink-0" fill="none" stroke="currentColor" strokeWidth="2"><path d="m9 1 7 8-7 8-7-8z" /></svg>
        <Chevron />
      </button>
      <button aria-label="自动关键帧" className="mr-3 ml-[9px]">
        <svg viewBox="0 0 18 18" className="size-[18px]" fill="currentColor">
          <path d="m9 0 9 9-9 9-9-9z" />
          <circle cx="6" cy="9" r="2" fill="none" stroke="#242424" strokeWidth="1.500" />
          <path d="M8 9h6v2.500M12 9v2" fill="none" stroke="#242424" strokeWidth="1.500" />
        </svg>
      </button>
      <button aria-label="吸附" className="flex h-7 w-9 items-center justify-center rounded-l bg-[#13467e]">
        <svg viewBox="0 0 16 18" className="h-[18px] w-4" fill="none" stroke="#8fa9c9" strokeWidth="4"><path d="M2.500 13V7a5.500 5.500 0 0 1 11 0v6" /><path d="M2.500 15v3M13.500 15v3" opacity=".6" /></svg>
      </button>
      <button aria-label="吸附选项" className="flex h-7 w-[17px] items-center justify-center rounded-r bg-[#2c2c2c]"><Dots /></button>
      <label className="relative flex items-center border-l-2 border-[#1a1a1a]">
        <select aria-label="帧率" className="h-7 w-[88px] appearance-none bg-transparent pl-[10px]"><option>20 fps</option></select>
        <Chevron className="pointer-events-none absolute right-[21px]" />
      </label>
      <button aria-label="曲线编辑器" className="flex h-7 items-center border-l-2 border-[#1a1a1a] pl-[13px]">
        <svg viewBox="0 0 19 18" className="h-[18px] w-[19px]" fill="none" stroke="#5c5c5c">
          <path d="M.5.500h18v17H.5zM6.500 0v18M12.500 0v18M0 6.500h19M0 12h19" />
          <path d="M0 6c4-2 6 1 9 5s6 3 10-2" stroke="#8a8a8a" strokeWidth="2" />
        </svg>
      </button>
      <button aria-label="锁定序列" className="ml-auto"><UnlockIcon className="h-[14px] w-[14px]" /></button>
    </div>
  );
}

function AnimationDock() {
  return (
    <section className="flex h-[291px] shrink-0 flex-col">
      <DockTab active wide label="动画" icon={<AnimIcon />} />
      <div className="flex min-h-0 grow bg-[#242424]">
        <div className="flex w-[234px] shrink-0 flex-col border-r-[5px] border-[#1a1a1a] pt-1">
          <div className="flex pl-1">
            <button className="flex h-[22px] w-[76px] items-center justify-center gap-1 rounded border border-[#1a1a1a] bg-[#383838] text-[13px] text-white">
              <Plus className="size-4 text-[#8bc34a]" strokeWidth={2} />动画
            </button>
            <SearchBox placeholder="搜索动画" className="ml-[3px] w-[141px]" />
          </div>
          <div className="mt-[3px] mb-[2px] ml-[2px] grow bg-[#1a1a1a]" />
        </div>
        <div className="flex min-w-0 grow flex-col">
          <SequencerBar />
          <div className="flex min-h-0 grow pr-[3px] pb-[2px]">
            <div className="flex w-[390px] shrink-0 flex-col">
              <div className="flex h-[31px] shrink-0 items-center pl-[6px] text-[13px]">
                <button className="flex h-[23px] w-[71px] items-center justify-center gap-1 rounded border border-[#1a1a1a] bg-[#383838] text-[#8a8a8a]">
                  <Plus className="size-4 text-[#5d7f38]" strokeWidth={2} />轨道
                </button>
                <SearchBox placeholder="搜索轨道" className="ml-1 w-[167px] opacity-60" />
                <button aria-label="筛选" className="ml-[5px]">
                  <svg viewBox="0 0 14 12" className="h-3 w-[14px]" fill="#7a7a7a"><path d="M0 0h14v2H0zM3 5h8v2H3zM5 10h4v2H5z" /></svg>
                </button>
                <span className="ml-4 text-[#7d4f16]">0.00</span>
                <span className="ml-6 text-[#7d4f16]">1 of 100</span>
              </div>
              <div className="mr-[5px] flex grow items-end bg-[#202020] px-2 text-[13px] leading-[18px] text-[#8a8a8a]">0个项目</div>
              <div className="flex h-[34px] shrink-0 items-center pl-[71px] text-[#6c6c6c]">
                {TRANSPORT.map((t) => (
                  <button key={t.name} aria-label={t.name} className={t.cls}>
                    <svg viewBox={t.box} className={`h-[18px] ${t.w}`} fill="currentColor" fillRule="evenodd"><path d={t.d} /></svg>
                  </button>
                ))}
              </div>
            </div>
            <Timeline />
          </div>
        </div>
      </div>
    </section>
  );
}

/* ---------- status bar ---------- */

function StatusBar() {
  return (
    <footer className="relative flex h-8 shrink-0 items-center bg-[#242424] text-[13px]">
      <button className="flex h-full w-[121px] items-center gap-1 border-r-2 border-[#151515] pl-[11px]"><FolderSearchIcon className="h-[15px] w-4" />内容侧滑菜单</button>
      <button className="flex h-full w-[68px] items-center gap-[5px] border-r-2 border-[#151515] pl-[10px]">
        <svg viewBox="0 0 16 14" className="h-[14px] w-4" fill="#b0b0b0"><path d="M1 6h14v8H1z" /><path d="m0 3 14-3v2L0 5z" fill="#888" /><path d="m3 2 1 2M7 1l1 2M11 0l1 2M3 9h4M9 9h4" stroke="#242424" /></svg>
        动画
      </button>
      <button className="flex h-full w-[94px] items-center gap-[6px] border-r-2 border-[#151515] pl-[11px]">
        <svg viewBox="0 0 13 16" className="h-4 w-[13px]" fill="#c0c0c0"><path d="M0 0h2v2h2V0h1v2h3V0h1v2h2V0h2v16H0z" /><path d="m3 6 3 3-3 3M7 13h4" fill="none" stroke="#222" strokeWidth="1.500" /></svg>
        输出日志
      </button>
      <button className="ml-[14px] flex items-center gap-1">
        <svg viewBox="0 0 16 14" className="h-[14px] w-4" fill="none" stroke="#c0c0c0" strokeWidth="1.500"><path d="M1 1h14v12H1zM3 4l3 3-3 3M8 10.500h5" /></svg>
        Cmd
        <Chevron />
      </button>
      <div className="ml-[10px] flex h-full w-[278px] items-center border-r-2 border-[#151515]">
        <input aria-label="控制台命令" placeholder="输入控制台命令" className="h-[22px] w-[268px] rounded border border-[#383838] bg-[#0f0f0f] pb-[2px] pl-2 text-[12px] placeholder:text-[#5e5e5e]" />
      </div>
      <div className="ml-auto flex h-full w-[205px] items-center border-l-2 border-[#151515] pl-3 text-[#8a8a8a]">
        <button className="flex items-center gap-2"><FaSave className="size-3" />所有已保存</button>
        <button className="ml-5 flex items-center gap-[6px]">
          <svg viewBox="0 0 14 14" className="size-[14px]" fill="#fff"><circle cx="3" cy="3" r="2.500" /><circle cx="11" cy="3" r="2.500" /><circle cx="3" cy="11" r="2.500" /><path d="M2.500 3h1v8h-1zM3 7l8-4" stroke="#fff" /></svg>
          版本控制
        </button>
      </div>
      <span className="absolute right-[11px] bottom-1 text-[20px] leading-7 whitespace-nowrap text-[#c8c8c8] [text-shadow:1px_1px_1px_#000]">CSDN @[小瓜偷学编程]</span>
    </footer>
  );
}

export default function App() {
  return (
    <div className="flex h-screen flex-col overflow-hidden bg-[#111] p-[2px] font-[Roboto,'Noto_Sans_CJK_SC',sans-serif] text-[#c0c0c0]">
      <div className="flex min-h-0 grow flex-col border border-[#333] bg-[#151515]">
        <TitleBar />
        <Toolbar />
        <main className="relative flex min-h-0 grow gap-[5px] py-1 pr-1 pl-1">
          <div className="flex w-[323px] shrink-0 flex-col gap-[5px]">
            <PalettePanel />
            <HierarchyPanel />
          </div>
          <div className="flex min-w-0 grow flex-col gap-[5px]">
            <div className="flex min-h-0 grow gap-[5px]">
              <Viewport />
              <DetailsPanel />
            </div>
            <AnimationDock />
          </div>
          {/* pointer annotation over the visibility row */}
          <svg viewBox="0 0 42 121" className="pointer-events-none absolute top-[386px] right-[163px] h-[121px] w-[42px]" fill="#ff3b38">
            <path d="m4 0 13 14-6 1 30 106L7 17l-6 2z" />
          </svg>
        </main>
        <StatusBar />
      </div>
    </div>
  );
}
